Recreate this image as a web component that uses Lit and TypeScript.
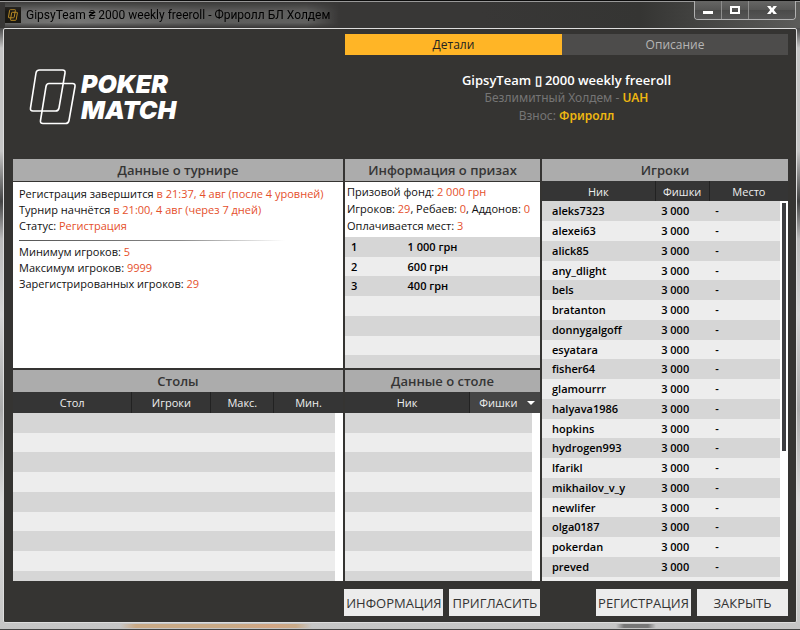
import { LitElement, html, css, svg } from "lit";
import { customElement, state } from "lit/decorators.js";

const PLAYERS = [
  "aleks7323", "alexei63", "alick85", "any_dlight", "bels", "bratanton",
  "donnygalgoff", "esyatara", "fisher64", "glamourrr", "halyava1986",
  "hopkins", "hydrogen993", "lfarikl", "mikhailov_v_y", "newlifer",
  "olga0187", "pokerdan", "preved",
];

const PRIZES = [
  ["1", "1 000 грн"],
  ["2", "600 грн"],
  ["3", "400 грн"],
];

const cardsMark = svg`
  <path d="M10.500 1H33.500Q36.500 1 36 4L30 39Q29.500 42 26.500 42H4Q1 42 1.500 39L7 4Q7.500 1 10.500 1Z"/>
  <path d="M20 14.500H43.500Q46.500 14.500 46 17.500L40 51.500Q39.500 54.500 36.500 54.500H14Q11 54.500 11.500 51.500L17 17.500Q17.500 14.500 20 14.500Z"/>`;

@customElement("app-root")
export class AppRoot extends LitElement {
  @state() private tab = "details";

  static styles = css`
    * { box-sizing: border-box; }
    :host {
      display: block;
      font-family: "Open Sans", "Noto Sans", sans-serif;
      font-size: 11px;
      color: #111;
    }
    button { font-family: inherit; border: 0; margin: 0; padding: 0; }
    .window {
      min-height: 100vh;
      height: 100vh;
      display: flex;
      flex-direction: column;
      padding: 0 3px 0 3px;
      background:
        linear-gradient(#0c0c0c 0 1px, #999 1px 2px, transparent 2px) top / 100% 2px no-repeat,
        linear-gradient(90deg, transparent 0 15%, #c9a985 17% 29%, #d2a583 34%, #c8aa88 37%, transparent 39% 77%, #777 78% 81%, transparent 82%) bottom 1px left / 100% 4px no-repeat,
        linear-gradient(90deg, #383736 60%, #353533 80%, #5c5c5a) top / 100% 28px no-repeat,
        linear-gradient(#4a4a4a 28px, #c6c6c6 48px, #c6c6c6 24%, #444 32%, #bbb 38%, #d5d5d5 50%, #aaa 65%, #ddd 80%, #c5c5c5);
      border-bottom: 1px solid #444;
    }
    .titlebar {
      display: flex;
      justify-content: space-between;
      align-items: flex-start;
      height: 28px;
      flex: none;
      padding: 1px 1px 0 2px;
    }
    .caption {
      display: flex;
      align-items: center;
      gap: 5px;
      height: 27px;
      font: 12px/20px Roboto, sans-serif;
      color: #000;
      padding-right: 10px;
      background: linear-gradient(90deg, #6a6a69, #767675 20%, #5c5c5b 60%, #60605f 90%, transparent);
      -webkit-mask: linear-gradient(transparent, #000 40% 80%, transparent);
    }
    .app-icon { width: 16px; height: 16px; background: #1b1914; display: block; }
    .caption h1 { margin: 0; font: inherit; }
    .controls {
      display: flex;
      border: 1px solid #b0b0b0;
      border-top: 0;
      border-radius: 0 0 4px 4px;
      height: 19px;
      overflow: hidden;
    }
    .controls button {
      width: 27px;
      display: grid;
      place-items: center;
      background: linear-gradient(#666665, #555554 50%, #4a4a49 50%, #555);
      border-right: 1px solid #8d8d8c;
    }
    .controls .close { width: 46px; border-right: 0; }
    .client {
      flex: 1;
      min-height: 0;
      display: flex;
      flex-direction: column;
      background: #353432;
      border: 1px solid #ddd;
      border-radius: 2px;
      padding: 5px 8px 6px 9px;
      margin-bottom: 6px;
    }
    .columns {
      display: grid;
      grid-template-columns: 330fr 195fr 246fr;
      column-gap: 2px;
    }
    .head { height: 125px; flex: none; }
    .logo {
      display: flex;
      gap: 4px;
      padding: 35px 0 0 16px;
      color: #fff;
    }
    .logo svg { width: 48px; height: 56px; flex: none; }
    .logo p {
      margin: 0;
      padding-top: 2px;
      font: italic 900 25px/26px Inter, sans-serif;
    }
    .info { grid-column: 2 / 4; }
    .tabs { display: grid; grid-template-columns: 217fr 226fr; }
    .tabs button {
      height: 21px;
      font-size: 12px;
      background: #4d4c4b;
      color: #b5b5b5;
    }
    .tabs .active { background: #ffb526; color: #222; }
    .summary {
      text-align: center;
      padding-top: 16px;
      font-family: "Noto Sans", sans-serif;
      font-size: 12px;
      line-height: 18px;
      color: #757575;
    }
    .summary p, .summary h2 { margin: 0; }
    .summary h2 { font: 600 13px/18px "Open Sans", sans-serif; color: #fff; }
    .summary b { font-weight: 600; color: #eeb711; }
    .panels {
      flex: 1;
      min-height: 0;
      grid-template-rows: 209fr 211fr;
      row-gap: 2px;
    }
    .panel {
      min-height: 0;
      overflow: hidden;
      display: flex;
      flex-direction: column;
      background: #fff;
    }
    .tall { grid-row: 1 / 3; grid-column: 3; }
    .panel h3 {
      margin: 0;
      height: 22px;
      flex: none;
      background: #acacac;
      color: #353535;
      font-size: 13px;
      line-height: 22px;
      font-weight: 600;
      text-align: center;
    }
    .facts { border-top: 1px solid #353432; padding: 4px 6px; line-height: 16px; }
    .facts p { margin: 0; white-space: nowrap; }
    .facts.prize { padding: 1px 2px 3px; line-height: 17px; }
    em { font-style: normal; color: #e54f2b; }
    hr {
      border: 0;
      height: 1px;
      margin: 6px 52px 3px 0;
      background: linear-gradient(90deg, #555, #888 60%, #fff);
    }
    .list { position: relative; flex: 1; min-height: 0; overflow: hidden; }
    table {
      width: 100%;
      table-layout: fixed;
      border-collapse: collapse;
    }
    th {
      height: 21px;
      padding: 0;
      background: #353535;
      color: #eee;
      font-weight: 400;
      border-right: 1px solid #222;
    }
    th:last-child { border-right: 0; }
    td {
      height: 20px;
      padding: 0;
      line-height: 18px;
      font-weight: 600;
      color: #000;
      white-space: nowrap;
    }
    tbody tr { background: #ededed; }
    tbody tr:nth-child(odd) { background: #d6d6d6; }
    .short-second tr:nth-child(4n + 2) td, .short-fourth tr:nth-child(4n) td { height: 19px; }
    .players td:first-child { padding-left: 10px; }
    .players td { padding-left: 6px; }
    .players th { height: 20px; }
    .prizes td { padding-left: 6px; }
    .w-place { width: 29%; }
    .w-table { width: 36%; }
    .w-seats { width: 24%; }
    .w-max { width: 19%; }
    .w-nick { width: 64%; }
    .w-player { width: 46%; }
    .w-chips { width: 22%; }
    th.sorted { background: #454545; }
    .sorted span { display: flex; justify-content: space-between; align-items: center; padding: 0 5px 0 9px; }
    .sorted span::after {
      content: "";
      border: 4px solid transparent;
      border-top-color: #fff;
      border-bottom: 0;
    }
    .track {
      position: absolute;
      right: 0;
      top: 21px;
      bottom: 0;
      width: 8px;
      background: #fff;
    }
    .track.thumbed { top: 20px; padding: 2px; }
    .thumb { height: 66%; background: #3c3d40; }
    .actions { flex: none; padding-top: 8px; }
    .actions div { display: flex; gap: 6px; }
    .actions .left { grid-column: 2; }
    .actions .right { justify-content: flex-end; }
    .actions button {
      height: 27px;
      width: 91px;
      background: #ececec;
      color: #333;
      font-size: 13px;
      white-space: nowrap;
      overflow: hidden;
    }
    .actions .wide { width: 99px; }
    .actions .medium { width: 95px; }
  `;

  private blankRows(count: number, span: number) {
    return Array.from({ length: count }, () => html`<tr><td colspan=${span}></td></tr>`);
  }

  private tabButton(id: string, label: string) {
    return html`<button role="tab" aria-selected=${this.tab === id}
      class=${this.tab === id ? "active" : ""} @click=${() => (this.tab = id)}>${label}</button>`;
  }

  render() {
    return html`
      <div class="window">
        <header class="titlebar">
          <div class="caption">
            <svg class="app-icon" viewBox="-16 -12 80 80" fill="none" stroke="#b88a24" stroke-width="5">${cardsMark}</svg>
            <h1>GipsyTeam ₴ 2000 weekly freeroll - Фриролл БЛ Холдем</h1>
          </div>
          <div class="controls">
            <button aria-label="Свернуть"><svg width="12" height="12"><path d="M1 7h10v3H1z" fill="#fff"/></svg></button>
            <button aria-label="Развернуть"><svg width="12" height="12"><path d="M2 3h8v6H2z" fill="none" stroke="#fff" stroke-width="2"/></svg></button>
            <button class="close" aria-label="Закрыть окно"><svg width="12" height="12"><path d="M1 2h3.500L6 4.200 7.500 2H11L7.800 6 11 10H7.500L6 7.800 4.500 10H1l3.200-4z" fill="#fff"/></svg></button>
          </div>
        </header>
        <main class="client">
          <section class="columns head">
            <div class="logo">
              <svg viewBox="0 0 48 56" fill="none" stroke="#fff" stroke-width="1.600">${cardsMark}</svg>
              <p>POKER<br>MATCH</p>
            </div>
            <div class="info">
              <div class="tabs" role="tablist">
                ${this.tabButton("details", "Детали")}
                ${this.tabButton("about", "Описание")}
              </div>
              <div class="summary">
                <h2>GipsyTeam ▯ 2000 weekly freeroll</h2>
                <p>Безлимитный Холдем - <b>UAH</b></p>
                <p>Взнос: <b>Фриролл</b></p>
              </div>
            </div>
          </section>
          <div class="columns panels">
            <section class="panel">
              <h3>Данные о турнире</h3>
              <div class="facts">
                <p>Регистрация завершится <em>в 21:37, 4 авг (после 4 уровней)</em></p>
                <p>Турнир начнётся <em>в 21:00, 4 авг (через 7 дней)</em></p>
                <p>Статус: <em>Регистрация</em></p>
                <hr>
                <p>Минимум игроков: <em>5</em></p>
                <p>Максимум игроков: <em>9999</em></p>
                <p>Зарегистрированных игроков: <em>29</em></p>
              </div>
            </section>
            <section class="panel">
              <h3>Информация о призах</h3>
              <div class="facts prize">
                <p>Призовой фонд: <em>2 000 грн</em></p>
                <p>Игроков: <em>29</em>, Ребаев: <em>0</em>, Аддонов: <em>0</em></p>
                <p>Оплачивается мест: <em>3</em></p>
              </div>
              <div class="list">
                <table class="prizes">
                  <colgroup><col class="w-place"><col></colgroup>
                  <tbody class="short-second">
                    ${PRIZES.map(([place, sum]) => html`<tr><td>${place}</td><td>${sum}</td></tr>`)}
                    ${this.blankRows(5, 2)}
                  </tbody>
                </table>
              </div>
            </section>
            <section class="panel tall">
              <h3>Игроки</h3>
              <div class="list">
                <table class="players">
                  <thead><tr><th class="w-player">Ник</th><th class="w-chips">Фишки</th><th>Место</th></tr></thead>
                  <tbody class="short-fourth">
                    ${PLAYERS.map((name) => html`<tr><td>${name}</td><td>3 000</td><td>-</td></tr>`)}
                    ${this.blankRows(1, 3)}
                  </tbody>
                </table>
                <div class="track thumbed"><div class="thumb"></div></div>
              </div>
            </section>
            <section class="panel">
              <h3>Столы</h3>
              <div class="list">
                <table>
                  <thead><tr><th class="w-table">Стол</th><th class="w-seats">Игроки</th><th class="w-max">Макс.</th><th>Мин.</th></tr></thead>
                  <tbody class="short-second">${this.blankRows(9, 4)}</tbody>
                </table>
                <div class="track"></div>
              </div>
            </section>
            <section class="panel">
              <h3>Данные о столе</h3>
              <div class="list">
                <table>
                  <thead><tr><th class="w-nick">Ник</th><th class="sorted"><span>Фишки</span></th></tr></thead>
                  <tbody class="short-second">${this.blankRows(9, 2)}</tbody>
                </table>
                <div class="track"></div>
              </div>
            </section>
          </div>
          <footer class="columns actions">
            <div class="left"><button class="wide">ИНФОРМАЦИЯ</button><button>ПРИГЛАСИТЬ</button></div>
            <div class="right"><button class="medium">РЕГИСТРАЦИЯ</button><button>ЗАКРЫТЬ</button></div>
          </footer>
        </main>
      </div>`;
  }
}
